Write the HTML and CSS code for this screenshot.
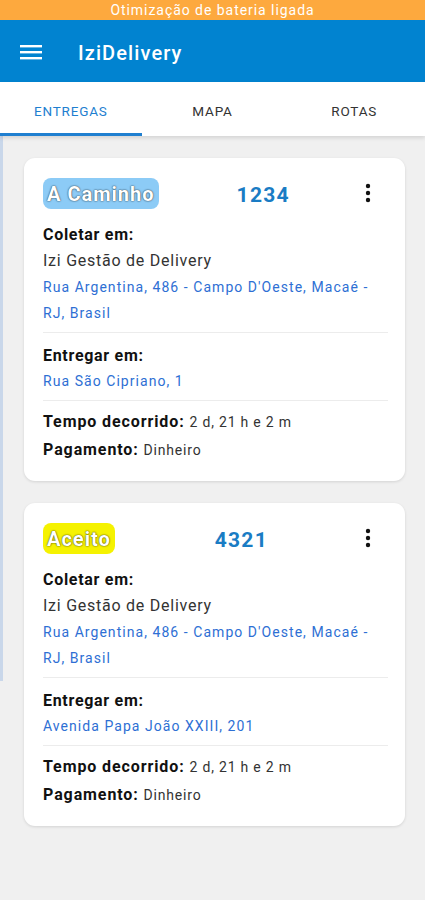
FILE: index.html
```html
<!DOCTYPE html>
<html lang="pt">
<head>
<meta charset="utf-8">
<link rel="stylesheet" href="styles.css">
</head>
<body>
<div class="status">Otimização de bateria ligada</div>
<header class="appbar">
  <svg class="menu" width="22" height="16" viewBox="0 0 22 16"><rect x="0" y="1" width="22" height="2.4" fill="#fff"/><rect x="0" y="7" width="22" height="2.4" fill="#fff"/><rect x="0" y="13" width="22" height="2.4" fill="#fff"/></svg>
  <span class="title">IziDelivery</span>
</header>
<nav class="tabs">
  <div class="tab active">ENTREGAS</div>
  <div class="tab">MAPA</div>
  <div class="tab">ROTAS</div>
</nav>
<main class="content">
  <div class="edge"></div>
  <section class="card">
    <div class="card-head">
      <span class="badge blue">A Caminho</span>
      <span class="num">1234</span>
      <svg class="kebab" width="6" height="20" viewBox="0 0 6 20"><circle cx="3" cy="3" r="2.2"/><circle cx="3" cy="10" r="2.2"/><circle cx="3" cy="17" r="2.2"/></svg>
    </div>
    <div class="block">
      <div class="label">Coletar em:</div>
      <div class="name">Izi Gestão de Delivery</div>
      <div class="addr">Rua Argentina, 486 - Campo D'Oeste, Macaé - RJ, Brasil</div>
    </div>
    <div class="block">
      <div class="label">Entregar em:</div>
      <div class="addr">Rua São Cipriano, 1</div>
    </div>
    <div class="block last">
      <div class="info"><b>Tempo decorrido:</b> <span>2 d, 21 h e 2 m</span></div>
      <div class="info"><b>Pagamento:</b> <span>Dinheiro</span></div>
    </div>
  </section>
  <section class="card">
    <div class="card-head">
      <span class="badge yellow">Aceito</span>
      <span class="num">4321</span>
      <svg class="kebab" width="6" height="20" viewBox="0 0 6 20"><circle cx="3" cy="3" r="2.2"/><circle cx="3" cy="10" r="2.2"/><circle cx="3" cy="17" r="2.2"/></svg>
    </div>
    <div class="block">
      <div class="label">Coletar em:</div>
      <div class="name">Izi Gestão de Delivery</div>
      <div class="addr">Rua Argentina, 486 - Campo D'Oeste, Macaé - RJ, Brasil</div>
    </div>
    <div class="block">
      <div class="label">Entregar em:</div>
      <div class="addr">Avenida Papa João XXIII, 201</div>
    </div>
    <div class="block last">
      <div class="info"><b>Tempo decorrido:</b> <span>2 d, 21 h e 2 m</span></div>
      <div class="info"><b>Pagamento:</b> <span>Dinheiro</span></div>
    </div>
  </section>
</main>
</body>
</html>
```
FILE: styles.css
```css
* { box-sizing: border-box; }
html, body { margin: 0; padding: 0; }
body {
  width: 425px;
  height: 900px;
  overflow: hidden;
  background: #f0f0f0;
  font-family: Roboto, "Liberation Sans", sans-serif;
}
.status {
  height: 20px;
  background: #fda93e;
  color: #fff;
  font-size: 14px;
  line-height: 21px;
  text-align: center;
  letter-spacing: 0.95px;
}
.appbar {
  height: 62px;
  background: #0183d0;
  display: flex;
  align-items: center;
  padding-left: 20px;
}
.menu { display: block; margin-top: 1px; }
.title {
  color: #fff;
  font-size: 20px;
  font-weight: 500;
  margin-left: 36px;
  margin-top: 4px;
  letter-spacing: 1.1px;
}
.tabs {
  height: 54px;
  background: #fff;
  display: flex;
  box-shadow: 0 2px 4px rgba(0,0,0,0.12);
  position: relative;
  z-index: 1;
}
.tab {
  flex: 1;
  display: flex;
  align-items: center;
  justify-content: center;
  font-size: 13.5px;
  color: #333;
  letter-spacing: 0.8px;
  padding-top: 6px;
  border-bottom: 3px solid transparent;
}
.tab.active { color: #1f7fd0; border-bottom-color: #1f7fd0; }
.content {
  position: relative;
  padding: 22px 20px 0 24px;
  display: flex;
  flex-direction: column;
  gap: 22px;
}
.edge {
  position: absolute;
  left: 0;
  top: 0;
  width: 3px;
  height: 545px;
  background: #c9d7ea;
}
.card {
  background: #fff;
  border-radius: 11px;
  box-shadow: 0 1px 3px rgba(0,0,0,0.12);
  padding: 19px 17px 17px 19px;
}
.card-head {
  display: flex;
  align-items: center;
  height: 32px;
}
.badge {
  font-size: 20px;
  font-weight: 700;
  color: #fff;
  padding: 0 4px 0 4px;
  height: 31px;
  line-height: 32px;
  border-radius: 8px;
  letter-spacing: 1px;
  text-shadow: 0 0 2px rgba(0,0,0,0.6), 0 0 1px rgba(0,0,0,0.55);
}
.badge.blue { background: #8ccbf6; }
.badge.yellow { background: #f5f200; }
.num {
  flex: 1;
  text-align: center;
  font-size: 21px;
  font-weight: 700;
  color: #1a7cc4;
  letter-spacing: 1.3px;
  padding-top: 3px;
  padding-left: 3px;
}
.kebab { fill: #111; margin-right: 17px; }
.block {
  border-bottom: 1px solid #ececec;
  padding: 1px 0 6px;
}
.card-head + .block { padding-top: 14px; }
.block + .block { padding-top: 11px; }
.block.last { border-bottom: none; padding-bottom: 0; padding-top: 7px; }
.label {
  font-size: 16px;
  font-weight: 700;
  color: #111;
  line-height: 24px;
  letter-spacing: 0.7px;
}
.name {
  font-size: 16px;
  color: #333;
  line-height: 27px;
  letter-spacing: 0.75px;
}
.addr {
  font-size: 14px;
  color: #2e6fd4;
  line-height: 26px;
  padding-right: 18px;
  letter-spacing: 1.05px;
}
.info {
  font-size: 16px;
  line-height: 27px;
  color: #111;
  letter-spacing: 0.9px;
}
.info b { font-weight: 700; }
.info span { font-size: 14px; color: #333; letter-spacing: 0.8px; }
```
